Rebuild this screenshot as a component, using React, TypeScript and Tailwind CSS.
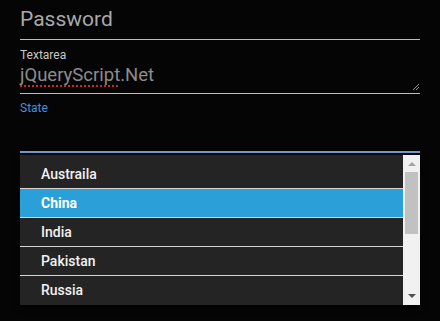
const countries = ['Austraila', 'China', 'India', 'Pakistan', 'Russia']

const ResizeGrip = () => (
  <svg width="8" height="8" viewBox="0 0 8 8" className="absolute right-0 bottom-[2px]">
    <path d="M7 1 L1 7 M7 4 L4 7" stroke="#9a9a9a" strokeWidth="1" />
  </svg>
)

const Scrollbar = () => (
  <div className="flex w-[17px] shrink-0 flex-col bg-[#f1f1f1]">
    <div className="flex h-[17px] items-center justify-center">
      <svg width="8" height="5" viewBox="0 0 8 5">
        <path d="M0 5 L4 1 L8 5 Z" fill="#a3a3a3" />
      </svg>
    </div>
    <div className="flex-1 px-[2px]">
      <div className="h-[62px] bg-[#c1c1c1]" />
    </div>
    <div className="flex h-[17px] items-center justify-center">
      <svg width="8" height="5" viewBox="0 0 8 5">
        <path d="M0 0 L8 0 L4 4 Z" fill="#505050" />
      </svg>
    </div>
  </div>
)

export default function App() {
  const selected = 'China'

  return (
    <div
      className="h-[321px] w-[440px] overflow-hidden bg-[#050505] px-5"
      style={{ fontFamily: 'Roboto, "Liberation Sans", sans-serif' }}
    >
      {/* password */}
      <div className="border-b border-[#bdbdbd] pt-[7px] pb-[8px]">
        <div className="h-[24px] text-[21px] leading-[24px] text-[#a9a9a9]">Password</div>
      </div>

      {/* textarea */}
      <div className="mt-[8px] text-[12px] leading-[14px] text-[#c8c8c8]">Textarea</div>
      <div className="relative h-[32px] border-b border-[#bdbdbd]">
        <div className="pt-[1px] text-[18.5px] leading-[24px] text-[#8c8c8c]">
          <span className="underline decoration-[#c82a2a] decoration-dotted decoration-[1.5px] underline-offset-[4px]">
            jQueryScript
          </span>
          .Net
        </div>
        <ResizeGrip />
      </div>

      {/* state select */}
      <div className="mt-[7px] text-[12px] leading-[14px] text-[#4a8fd8]">State</div>
      <div className="mt-[36px] h-[2px] bg-[#6f9fd6]" />
      <div className="mt-[2px] flex h-[150px] bg-[#242424] shadow-[0_2px_6px_rgba(0,0,0,0.6)]">
        <div className="flex-1 pt-[5px]">
          {countries.map((c, i) => (
            <div
              key={c}
              className={
                'h-[29px] pl-[21px] text-[14px] leading-[28px] ' +
                (i < countries.length - 1 ? 'border-b border-[#d6d6d6] ' : '') +
                (c === selected ? 'bg-[#2b9fd8] font-bold text-white' : 'font-medium text-[#f2f2f2]')
              }
            >
              {c}
            </div>
          ))}
        </div>
        <Scrollbar />
      </div>
    </div>
  )
}
